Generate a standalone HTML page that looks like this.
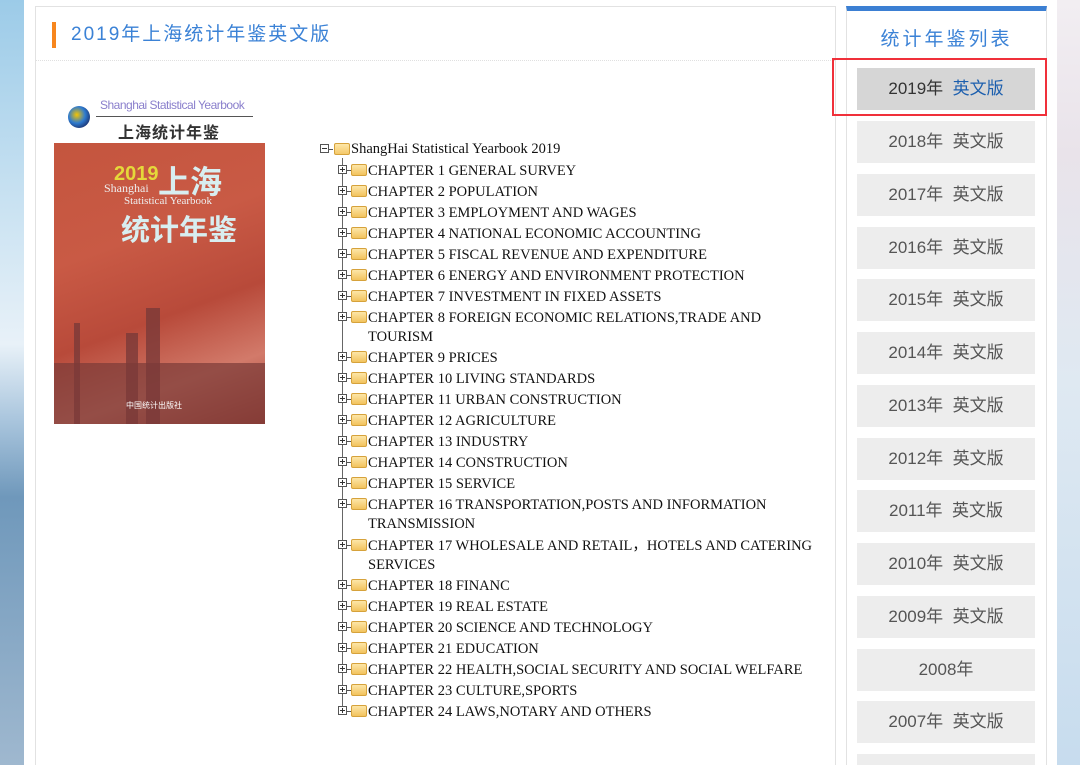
<!DOCTYPE html><html><head><meta charset="utf-8"><style>
html{height:765px;overflow:hidden}
body{margin:0;width:1080px;height:765px;overflow:hidden;position:relative;background:#fff;font-family:"Liberation Sans","Noto Sans CJK SC",sans-serif}
.bgl{position:absolute;left:0;top:0;width:24px;height:765px;background:linear-gradient(180deg,#9ccbe8 0%,#cfe5f3 30%,#e8f1f8 45%,#a9c5dd 55%,#6f98bb 65%,#9fb8cf 100%)}
.bgr{position:absolute;left:1057px;top:0;width:23px;height:765px;background:linear-gradient(180deg,#f2eef2 0%,#e9e3ea 20%,#dfe9f2 50%,#c7dcee 100%)}
.main{position:absolute;left:35px;top:6px;width:799px;height:759px;border:1px solid #e2e2e2;border-bottom:none;background:#fff}
.ttl{position:absolute;left:16px;top:15px;height:26px;border-left:4px solid #f7861e;padding-left:15px;font-size:19px;letter-spacing:2px;color:#3b82d6;line-height:26px}
.sep{position:absolute;left:0;top:53px;width:799px;border-top:1px dotted #e0e0e0}
.side{position:absolute;left:846px;top:6px;width:199px;height:754px;border:1px solid #e2e2e2;border-bottom:none;border-top:5px solid #3b7fd3;background:#fff}
.stt{position:absolute;left:0;width:199px;top:13px;text-align:center;font-size:19px;letter-spacing:3px;color:#3b82d6}
.it{position:absolute;left:857px;width:178px;height:42px;background:#ededed;color:#555;font-size:17px;text-align:center;line-height:42px}
.red{position:absolute;left:832px;top:58px;width:211px;height:54px;border:2px solid #f0303a}
.t{position:absolute;font-family:"Liberation Serif",serif;font-size:14.5px;line-height:19px;color:#111;white-space:nowrap}
.pl{position:absolute;width:7px;height:7px;border:1px solid #555;background:#fff}
.pl:before{content:"";position:absolute;left:1px;top:3px;width:5px;height:1px;background:#333}
.pl.p:after{content:"";position:absolute;left:3px;top:1px;width:1px;height:5px;background:#333}
.fd{position:absolute;width:14px;height:10px;background:linear-gradient(#fde6a8,#f2c35e);border:1px solid #d6a23b;border-radius:2px}
.hl{position:absolute;height:1px;background:#555;width:4px}
</style></head><body>
<div class="bgl"></div><div class="bgr"></div>
<div class="main"><div class="ttl">2019年上海统计年鉴英文版</div><div class="sep"></div></div>
<div style="position:absolute;left:68px;top:106px;width:22px;height:22px;border-radius:50%;background:radial-gradient(circle at 40% 40%,#f5c400 0,#2e7bd0 45%,#1b2f6a 80%)"></div>
<div style="position:absolute;left:100px;top:98px;font-size:12px;color:#8a7fcc;letter-spacing:-0.5px">Shanghai Statistical Yearbook</div>
<div style="position:absolute;left:96px;top:116px;width:157px;border-top:1px solid #555"></div>
<div style="position:absolute;left:118px;top:119px;font-size:16px;font-weight:bold;color:#333;letter-spacing:1px">上海统计年鉴</div>
<div style="position:absolute;left:54px;top:143px;width:211px;height:281px;background:linear-gradient(160deg,#c4553e 0%,#c95a45 35%,#b84a3a 60%,#d27a6a 80%,#a04035 100%);overflow:hidden">
<div style="position:absolute;left:60px;top:20px;font-size:20px;font-weight:bold;color:#e5d83a">2019</div>
<div style="position:absolute;left:104px;top:14px;font-size:32px;font-weight:bold;color:#d8eef0">上海</div>
<div style="position:absolute;left:50px;top:38px;font-family:'Liberation Serif',serif;font-size:12px;color:#eee">Shanghai</div>
<div style="position:absolute;left:70px;top:52px;font-family:'Liberation Serif',serif;font-size:11px;color:#eee">Statistical Yearbook</div>
<div style="position:absolute;left:67px;top:64px;font-size:29px;font-weight:bold;color:#d8eef0">统计年鉴</div>
<div style="position:absolute;left:0;top:220px;width:211px;height:61px;background:#7a3a38;opacity:.7"></div>
<div style="position:absolute;left:92px;top:165px;width:14px;height:116px;background:#7a3a38;opacity:.8"></div>
<div style="position:absolute;left:72px;top:190px;width:12px;height:91px;background:#7a3a38;opacity:.8"></div>
<div style="position:absolute;left:20px;top:180px;width:6px;height:101px;background:#7a3a38;opacity:.8"></div>
<div style="position:absolute;left:72px;top:257px;font-size:8px;color:#fff">中国统计出版社</div>
</div>
<div style="position:absolute;left:342px;top:158px;width:1px;height:554px;background:#666"></div>
<div class="pl" style="left:320px;top:144px"></div><div class="hl" style="left:329px;top:149px"></div>
<div class="fd" style="left:334px;top:143px;background:linear-gradient(#fde6a8,#f5c96a)"></div>
<div class="t" style="left:351px;top:140px">ShangHai Statistical Yearbook 2019</div>
<div id="tr"></div>
<div class="side"><div class="stt">统计年鉴列表</div></div>
<div class="it" style="top:68px;background:#d6d6d6;color:#333">2019年&nbsp;&nbsp;<span style="color:#1c5fae">英文版</span></div>
<div class="red"></div>
<div class="it" style="top:121px">2018年&nbsp;&nbsp;英文版</div>
<div class="it" style="top:174px">2017年&nbsp;&nbsp;英文版</div>
<div class="it" style="top:227px">2016年&nbsp;&nbsp;英文版</div>
<div class="it" style="top:279px">2015年&nbsp;&nbsp;英文版</div>
<div class="it" style="top:332px">2014年&nbsp;&nbsp;英文版</div>
<div class="it" style="top:385px">2013年&nbsp;&nbsp;英文版</div>
<div class="it" style="top:438px">2012年&nbsp;&nbsp;英文版</div>
<div class="it" style="top:490px">2011年&nbsp;&nbsp;英文版</div>
<div class="it" style="top:543px">2010年&nbsp;&nbsp;英文版</div>
<div class="it" style="top:596px">2009年&nbsp;&nbsp;英文版</div>
<div class="it" style="top:649px">2008年</div>
<div class="it" style="top:701px">2007年&nbsp;&nbsp;英文版</div>
<div class="it" style="top:754px;height:11px"></div>
<script>
var rows=[[170,"CHAPTER 1 GENERAL SURVEY"],[191,"CHAPTER 2 POPULATION"],[212,"CHAPTER 3 EMPLOYMENT AND WAGES"],[233,"CHAPTER 4 NATIONAL ECONOMIC ACCOUNTING"],[254,"CHAPTER 5 FISCAL REVENUE AND EXPENDITURE"],[275,"CHAPTER 6 ENERGY AND ENVIRONMENT PROTECTION"],[296,"CHAPTER 7 INVESTMENT IN FIXED ASSETS"],[317,"CHAPTER 8 FOREIGN ECONOMIC RELATIONS,TRADE AND<br>TOURISM"],[357,"CHAPTER 9 PRICES"],[378,"CHAPTER 10 LIVING STANDARDS"],[399,"CHAPTER 11 URBAN CONSTRUCTION"],[420,"CHAPTER 12 AGRICULTURE"],[441,"CHAPTER 13 INDUSTRY"],[462,"CHAPTER 14 CONSTRUCTION"],[483,"CHAPTER 15 SERVICE"],[504,"CHAPTER 16 TRANSPORTATION,POSTS AND INFORMATION<br>TRANSMISSION"],[545,"CHAPTER 17 WHOLESALE AND RETAIL，HOTELS AND CATERING<br>SERVICES"],[585,"CHAPTER 18 FINANC"],[606,"CHAPTER 19 REAL ESTATE"],[627,"CHAPTER 20 SCIENCE AND TECHNOLOGY"],[648,"CHAPTER 21 EDUCATION"],[669,"CHAPTER 22 HEALTH,SOCIAL SECURITY AND SOCIAL WELFARE"],[690,"CHAPTER 23 CULTURE,SPORTS"],[711,"CHAPTER 24 LAWS,NOTARY AND OTHERS"]];
var h="";rows.forEach(function(r){var y=r[0];h+='<div class="pl p" style="left:338px;top:'+(y-5)+'px"></div><div class="hl" style="left:347px;top:'+y+'px"></div><div class="fd" style="left:351px;top:'+(y-6)+'px"></div><div class="t" style="left:368px;top:'+(y-8)+'px">'+r[1]+'</div>';});
document.getElementById("tr").innerHTML=h;
</script>
</body></html>
